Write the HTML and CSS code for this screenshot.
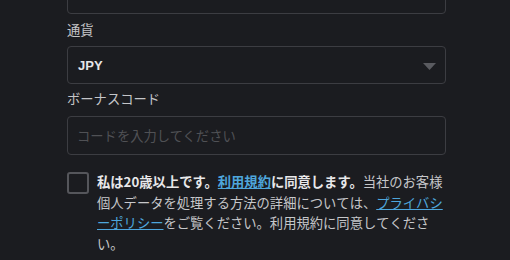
FILE: index.html
```html
<!DOCTYPE html>
<html lang="ja">
<head>
<meta charset="utf-8">
<link rel="stylesheet" href="styles.css">
</head>
<body>
<div class="form">
  <div class="field top-field"></div>
  <div class="label label-first">通貨</div>
  <div class="field select">
    <span class="value">JPY</span>
    <svg class="caret" width="13" height="7" viewBox="0 0 13 7"><path d="M0 0H13L6.5 7Z" fill="#5a5b60"/></svg>
  </div>
  <div class="label">ボーナスコード</div>
  <div class="field input"><span class="placeholder">コードを入力してください</span></div>
  <div class="agree">
    <span class="checkbox"></span>
    <p class="terms"><b class="strong">私は20歳以上です。</b><a class="link strong" href="#">利用規約</a><b class="strong">に同意します。</b>当社のお客様個人データを処理する方法の詳細については、<a class="link" href="#">プライバシーポリシー</a>をご覧ください。利用規約に同意してください。</p>
  </div>
</div>
</body>
</html>
```
FILE: styles.css
```css
html, body {
  margin: 0;
  padding: 0;
  background: #1b1c20;
  font-family: "Noto Sans CJK JP", "Noto Sans", sans-serif;
  font-size: 13.3px;
}
.form {
  margin-left: 67px;
  width: 379px;
}
.field {
  box-sizing: border-box;
  height: 38px;
  border: 1px solid #3c3d42;
  border-radius: 4px;
  display: flex;
  align-items: center;
  padding: 0 9px;
}
.top-field {
  margin-top: -24px;
}
.label {
  color: #c4c5c8;
  line-height: 20px;
  padding: 5px 0 7px;
}
.label-first {
  padding: 6px 0 6px;
}
.select {
  justify-content: space-between;
}
.value {
  color: #e6e6e8;
  font-family: "Liberation Sans", Arial, sans-serif;
  font-weight: bold;
  font-size: 13px;
  padding-left: 1px;
}
.caret {
  margin-right: 0;
  margin-top: 2px;
}
.input {
  height: 39px;
}
.placeholder {
  color: #505155;
}
.agree {
  display: flex;
  align-items: flex-start;
  gap: 8px;
  margin-top: 17px;
}
.checkbox {
  flex: none;
  box-sizing: border-box;
  width: 22px;
  height: 22px;
  border: 2px solid #55565b;
  border-radius: 3px;
}
.terms {
  margin: 0;
  color: #c6c7ca;
  line-height: 20.6px;
  width: 349px;
  font-kerning: none;
  font-feature-settings: "kern" 0, "chws" 0, "halt" 0;
  text-spacing-trim: space-all;
}
.strong {
  color: #e8e8ea;
  font-weight: bold;
  font-kerning: normal;
  font-feature-settings: normal;
  text-spacing-trim: normal;
}
.link {
  color: #4ea6dc;
  text-decoration: underline;
}
```
